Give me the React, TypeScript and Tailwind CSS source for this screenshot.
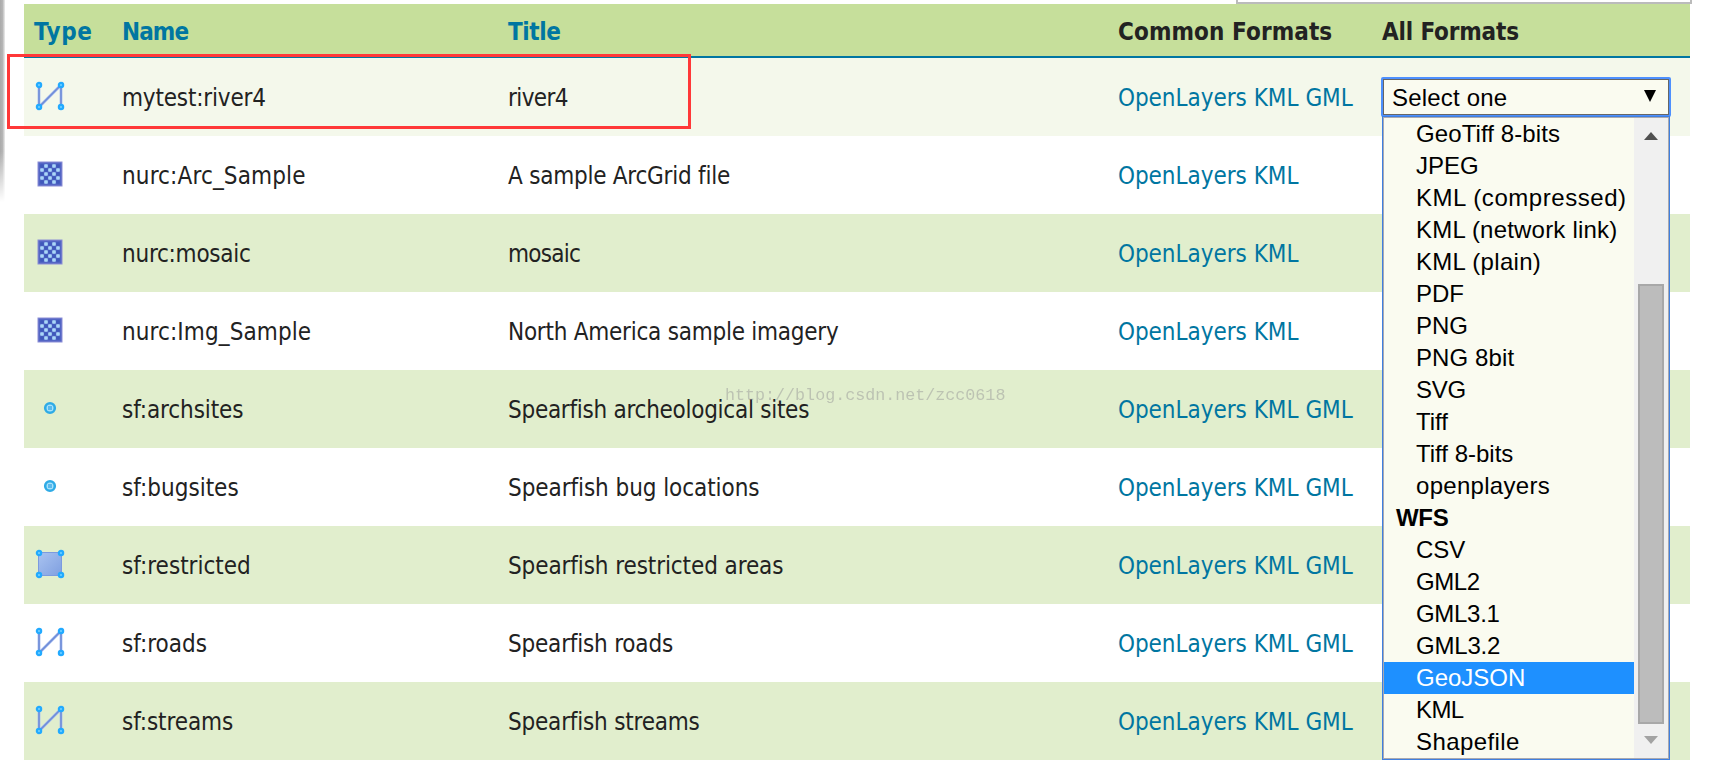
import { useState } from "react";
import clsx from "clsx";

type LayerType = "line" | "raster" | "point" | "polygon";

type Layer = {
  type: LayerType;
  name: string;
  nameStyle: string;
  title: string;
  titleStyle: string;
  gml: boolean;
};

const layers: Layer[] = [
  { type: "line", name: "mytest:river4", nameStyle: "tracking-[-0.18px]", title: "river4", titleStyle: "tracking-[-0.6px]", gml: true },
  { type: "raster", name: "nurc:Arc_Sample", nameStyle: "tracking-[0.13px]", title: "A sample ArcGrid file", titleStyle: "tracking-[-0.24px]", gml: false },
  { type: "raster", name: "nurc:mosaic", nameStyle: "tracking-[-0.25px]", title: "mosaic", titleStyle: "tracking-[-0.75px]", gml: false },
  { type: "raster", name: "nurc:Img_Sample", nameStyle: "tracking-[0.1px]", title: "North America sample imagery", titleStyle: "tracking-[-0.25px]", gml: false },
  { type: "point", name: "sf:archsites", nameStyle: "tracking-[-0.1px]", title: "Spearfish archeological sites", titleStyle: "tracking-[-0.27px]", gml: true },
  { type: "point", name: "sf:bugsites", nameStyle: "tracking-normal", title: "Spearfish bug locations", titleStyle: "tracking-[-0.07px]", gml: true },
  { type: "polygon", name: "sf:restricted", nameStyle: "tracking-normal", title: "Spearfish restricted areas", titleStyle: "tracking-[-0.1px]", gml: true },
  { type: "line", name: "sf:roads", nameStyle: "tracking-normal", title: "Spearfish roads", titleStyle: "tracking-[-0.2px]", gml: true },
  { type: "line", name: "sf:streams", nameStyle: "tracking-[-0.1px]", title: "Spearfish streams", titleStyle: "tracking-[-0.2px]", gml: true },
];

const formats = [
  { label: "GeoTiff 8-bits", style: "tracking-[0.1px]" },
  { label: "JPEG", style: "" },
  { label: "KML (compressed)", style: "tracking-[0.55px]" },
  { label: "KML (network link)", style: "tracking-[0.2px]" },
  { label: "KML (plain)", style: "tracking-[0.3px]" },
  { label: "PDF", style: "" },
  { label: "PNG", style: "" },
  { label: "PNG 8bit", style: "tracking-[0.1px]" },
  { label: "SVG", style: "tracking-[-0.3px]" },
  { label: "Tiff", style: "" },
  { label: "Tiff 8-bits", style: "" },
  { label: "openplayers", style: "tracking-[0.3px]" },
  { label: "WFS", group: true, style: "tracking-[-0.3px]" },
  { label: "CSV", style: "" },
  { label: "GML2", style: "tracking-[-0.4px]" },
  { label: "GML3.1", style: "tracking-[-0.3px]" },
  { label: "GML3.2", style: "tracking-[-0.2px]" },
  { label: "GeoJSON", style: "" },
  { label: "KML", style: "tracking-[-0.6px]" },
  { label: "Shapefile", style: "tracking-[0.4px]" },
];

const corners = [
  [5, 5],
  [27, 5],
  [5, 27],
  [27, 27],
];

function Corners() {
  return (
    <>
      {corners.map(([x, y]) => (
        <circle key={`${x}-${y}`} cx={x} cy={y} r="2.1" fill="#7ad4ff" stroke="#22aaff" strokeWidth="2.3" />
      ))}
    </>
  );
}

function LayerIcon({ type }: { type: LayerType }) {
  if (type === "line") {
    return (
      <svg viewBox="0 0 32 32" className="block size-8">
        <path d="M5 5V27L27 5V27" fill="none" stroke="#a9bff0" strokeWidth="2.8" />
        <path d="M5 5V27L27 5V27" fill="none" stroke="#6f8cd8" strokeWidth="1.6" />
        <Corners />
      </svg>
    );
  }

  if (type === "polygon") {
    return (
      <svg viewBox="0 0 32 32" className="block size-8">
        <defs>
          <linearGradient id="area" x1="0" y1="0" x2="1" y2="1">
            <stop offset="0" stopColor="#a9c3f0" />
            <stop offset="1" stopColor="#7f9fe0" />
          </linearGradient>
        </defs>
        <rect x="4.5" y="4.5" width="23" height="23" fill="url(#area)" stroke="#7b9ae0" />
        <Corners />
      </svg>
    );
  }

  if (type === "point") {
    return (
      <svg viewBox="0 0 32 32" className="block size-8">
        <circle cx="16" cy="16" r="4.8" fill="#a8e2fb" stroke="#2fabe6" strokeWidth="2.6" />
        <rect x="14" y="14" width="4" height="4" fill="#5ab9ec" />
      </svg>
    );
  }

  return (
    <svg viewBox="0 0 32 32" className="block size-8">
      <rect x="4" y="4" width="24" height="24" fill="#5365c4" stroke="#8c8ed6" />
      {[0, 1, 2, 3, 4].map((row) =>
        [0, 1, 2, 3, 4].map((col) => (
          <rect
            key={`${row}-${col}`}
            x={6.2 + col * 4}
            y={6.2 + row * 4}
            width="3.6"
            height="3.6"
            rx="0.8"
            fill={(row + col) % 2 ? "#a9d6f8" : "#3f58bb"}
          />
        ))
      )}
    </svg>
  );
}

function FormatSelect() {
  const [selected, setSelected] = useState("GeoJSON");

  return (
    <div className="relative h-10 w-[290px] -ml-px -mt-px font-['Liberation_Sans',sans-serif] text-black">
      <div className="flex h-10 items-center justify-between rounded-[2px] border-2 border-[#4d90fe] bg-[#fafbf0]">
        <div className="flex h-full w-full items-center justify-between border border-[#666] pt-0.5 pl-2 pr-3">
          <span className="tracking-[0.2px]">Select one</span>
          <svg viewBox="0 0 12 12" className="mb-1 h-3 w-3">
            <path d="M0 0H12L6 12Z" fill="#000" />
          </svg>
        </div>
      </div>
      <div className="absolute left-px top-[39px] z-10 flex w-[288px] border border-[#3f7fe0] bg-[#fafbf0]">
        <div className="flex w-full border border-[#a9a9b0]">
          <ul className="w-[250px]">
            {formats.map((format) => (
              <li
                key={format.label}
                onClick={() => !format.group && setSelected(format.label)}
                className={clsx(
                  "h-8 whitespace-nowrap leading-8",
                  format.group ? "pl-3 font-bold" : "pl-8",
                  format.label === selected && "bg-[#1e90ff] text-white",
                  format.style
                )}
              >
                {format.label}
              </li>
            ))}
          </ul>
          <div className="flex w-[34px] flex-col items-center bg-[#f0f0f0] pr-1 pl-1">
            <svg viewBox="0 0 14 8" className="mt-[14px] h-2 w-[14px]">
              <path d="M0 8L7 0L14 8Z" fill="#505050" />
            </svg>
            <div className="mt-[144px] h-[440px] w-[26px] border-2 border-[#a8a8a8] bg-[#bcbcbc]" />
            <svg viewBox="0 0 14 8" className="mt-3 h-2 w-[14px]">
              <path d="M0 0H14L7 8Z" fill="#a3a3a3" />
            </svg>
          </div>
        </div>
      </div>
    </div>
  );
}

export default function App() {
  return (
    <div className="relative h-[770px] w-[1710px] overflow-hidden bg-white font-['DejaVu_Sans_Condensed','DejaVu_Sans',sans-serif] text-[24px] text-[#222]">
      <div className="absolute left-0 top-0 h-[202px] w-[5px] bg-linear-to-r from-[#aaa] via-[#b5b5b5] to-[#eee] mask-b-from-75%" />
      <div className="absolute -top-4 left-[1236px] h-5 w-[456px] border-2 border-[#bbb]" />

      <div className="pl-6 pt-1">
        <table className="w-[1666px] table-fixed border-collapse">
          <colgroup>
            <col className="w-[90px]" />
            <col className="w-[386px]" />
            <col className="w-[610px]" />
            <col className="w-[264px]" />
            <col className="w-[316px]" />
          </colgroup>
          <thead>
            <tr className="h-[54px] bg-[#c6df9b] text-left text-[#0076a1] [&>th]:pt-0.5 [&>th]:pb-0 [&>th]:leading-8 [&>th]:shadow-[inset_0_-2px_#0076a1]">
              <th className="pl-2.5 tracking-[0.6px]">Type</th>
              <th className="pl-2 tracking-[-0.9px]">Name</th>
              <th className="pl-2 tracking-[-0.4px]">Title</th>
              <th className="pl-2 tracking-[0.1px] text-[#222]">Common Formats</th>
              <th className="pl-2 tracking-[-0.15px] text-[#222]">All Formats</th>
            </tr>
          </thead>
          <tbody>
            {layers.map((layer, index) => (
              <tr
                key={layer.name}
                className={clsx(
                  "h-[78px] whitespace-nowrap",
                  index === 0 ? "bg-[#f4f8eb]" : index % 2 === 0 ? "bg-[#e1eecd]" : "bg-white"
                )}
              >
                <td className="p-0 pb-0.5 pl-2.5">
                  <LayerIcon type={layer.type} />
                </td>
                <td className={clsx("p-0 pt-0.5 pl-2", layer.nameStyle)}>{layer.name}</td>
                <td className={clsx("p-0 pt-0.5 pl-2", layer.titleStyle)}>{layer.title}</td>
                <td className="p-0 pt-0.5 pl-2 tracking-[-0.04px] text-[#0076a1]">
                  <div className="flex gap-[7px]">
                    <a>OpenLayers</a>
                    <a>KML</a>
                    {layer.gml && <a>GML</a>}
                  </div>
                </td>
                <td className="p-0 pl-2">{index === 0 && <FormatSelect />}</td>
              </tr>
            ))}
          </tbody>
        </table>
      </div>

      <div className="absolute left-[7px] top-[54px] h-[75px] w-[684px] border-3 border-[#ff3838]" />
      <div className="absolute left-[725px] top-[384px] font-['Liberation_Mono',monospace] text-[16.7px] leading-6 text-[#999] opacity-50">
        http://blog.csdn.net/zcc0618
      </div>
    </div>
  );
}
